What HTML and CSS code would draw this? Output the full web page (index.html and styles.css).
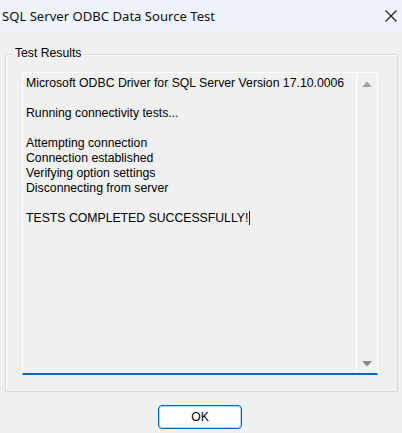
FILE: index.html
```html
<!DOCTYPE html>
<html>
<head>
<meta charset="utf-8">
<link rel="stylesheet" href="styles.css">
</head>
<body>
<div class="window">
  <div class="titlebar">
    <span class="title">SQL Server ODBC Data Source Test</span>
    <svg class="close" width="12" height="12" viewBox="0 0 12 12"><path d="M0.5 0.5 L11.5 11.5 M11.5 0.5 L0.5 11.5" stroke="#1a1a1a" stroke-width="1.1" fill="none"/></svg>
  </div>
  <div class="client">
    <div class="group">
      <span class="legend">Test Results</span>
      <div class="textbox">
        <div class="content">
          <div class="line">Microsoft ODBC Driver for SQL Server Version 17.10.0006</div>
          <div class="line">&nbsp;</div>
          <div class="line">Running connectivity tests...</div>
          <div class="line">&nbsp;</div>
          <div class="line">Attempting connection</div>
          <div class="line">Connection established</div>
          <div class="line">Verifying option settings</div>
          <div class="line">Disconnecting from server</div>
          <div class="line">&nbsp;</div>
          <div class="line">TESTS COMPLETED SUCCESSFULLY!<span class="caret"></span></div>
        </div>
        <div class="scrollbar">
          <svg width="10" height="6" viewBox="0 0 10 6"><path d="M0 6 L5 0.5 L10 6 Z" fill="#a3a3a3"/></svg>
          <svg width="10" height="6" viewBox="0 0 10 6"><path d="M0 0 L5 5.5 L10 0 Z" fill="#8a8a8a"/></svg>
        </div>
      </div>
    </div>
    <div class="buttons">
      <button class="btn">OK</button>
    </div>
  </div>
</div>
</body>
</html>
```
FILE: styles.css
```css
html, body {
  margin: 0;
  padding: 0;
  background: #f0f0f0;
}
.window {
  width: 402px;
  height: 433px;
  overflow: hidden;
  background: #f0f0f0;
}
.titlebar {
  height: 33px;
  background: #eef3f9;
  display: flex;
  align-items: center;
  justify-content: space-between;
  padding: 0 5px 0 2px;
  box-sizing: border-box;
}
.title {
  font-family: "Noto Sans", sans-serif;
  font-size: 13.1px;
  color: #111;
  margin-top: -2px;
}
.close {
  margin-top: -1px;
}
.client {
  padding: 21px 4px 0 5px;
}
.group {
  position: relative;
  padding: 17px 19px 16px 16px;
  border: 1px solid #d9d9d9;
  box-shadow: inset 1px 1px 0 #fbfbfb;
  border-radius: 1px;
}
.legend {
  position: absolute;
  left: 7px;
  top: -9px;
  padding: 0 2px;
  background: #f0f0f0;
  font-family: "Liberation Sans", Arial, sans-serif;
  font-size: 12.2px;
  line-height: 14px;
  color: #000;
}
.textbox {
  height: 303px;
  box-sizing: border-box;
  border: 1px solid #ffffff;
  border-bottom: 2px solid #0067c0;
  display: flex;
  background: #f0f0f0;
}
.content {
  flex: 1;
  padding: 3px 3px 0 3px;
  font-family: "Liberation Sans", Arial, sans-serif;
  font-size: 12.25px;
  line-height: 15px;
  color: #000;
}
.line {
  white-space: nowrap;
}
.caret {
  display: inline-block;
  width: 1px;
  height: 14px;
  background: #222;
  vertical-align: -3px;
  margin-left: 1px;
}
.scrollbar {
  width: 20px;
  border-left: 1px solid #ffffff;
  display: flex;
  flex-direction: column;
  justify-content: space-between;
  align-items: center;
  padding: 8px 0 6px 0;
}
.buttons {
  display: flex;
  justify-content: center;
  padding-top: 13px;
}
.btn {
  width: 84px;
  height: 24px;
  box-sizing: border-box;
  border: 1px solid #0067c0;
  box-shadow: inset 0 0 0 1px #b9d6f1;
  border-radius: 4px;
  background: #fdfdfd;
  font-family: "Liberation Sans", Arial, sans-serif;
  font-size: 12.2px;
  color: #000;
  padding: 0;
  margin-right: 3px;
}
```
